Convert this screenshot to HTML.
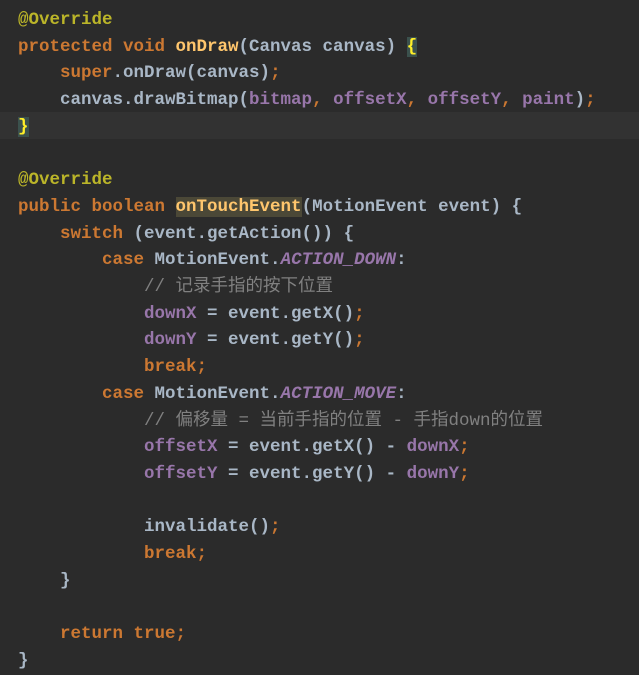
<!DOCTYPE html>
<html><head><meta charset="utf-8"><style>
html,body{margin:0;padding:0;background:#2b2b2b;width:639px;height:672px;overflow:hidden}
pre{margin:0;position:absolute;top:7px;left:18px;font-family:"Liberation Mono","Noto Sans CJK SC",monospace;font-size:17.5px;line-height:26.7px;color:#a9b7c6;font-weight:bold}
.k{color:#cc7832}.a{color:#bbb529}.m{color:#ffc66d}.f{color:#9876aa}.i{color:#9876aa;font-style:italic}.c{color:#808080;font-weight:normal}
.hl{background:#4b4837;}
.br{background:#3b514d;color:#ffef28}
.cur{position:absolute;left:0;top:112px;width:639px;height:27px;background:#323232}
</style></head><body>
<div class="cur"></div>
<pre><span class="a">@Override</span>
<span class="k">protected void </span><span class="m">onDraw</span>(Canvas canvas) <span class="br">{</span>
    <span class="k">super</span>.onDraw(canvas)<span class="k">;</span>
    canvas.drawBitmap(<span class="f">bitmap</span><span class="k">, </span><span class="f">offsetX</span><span class="k">, </span><span class="f">offsetY</span><span class="k">, </span><span class="f">paint</span>)<span class="k">;</span>
<span class="br">}</span>

<span class="a">@Override</span>
<span class="k">public boolean </span><span class="m hl">onTouchEvent</span>(MotionEvent event) {
    <span class="k">switch </span>(event.getAction()) {
        <span class="k">case </span>MotionEvent.<span class="i">ACTION_DOWN</span>:
            <span class="c">// 记录手指的按下位置</span>
            <span class="f">downX </span>= event.getX()<span class="k">;</span>
            <span class="f">downY </span>= event.getY()<span class="k">;</span>
            <span class="k">break;</span>
        <span class="k">case </span>MotionEvent.<span class="i">ACTION_MOVE</span>:
            <span class="c">// 偏移量 = 当前手指的位置 - 手指down的位置</span>
            <span class="f">offsetX </span>= event.getX() - <span class="f">downX</span><span class="k">;</span>
            <span class="f">offsetY </span>= event.getY() - <span class="f">downY</span><span class="k">;</span>

            invalidate()<span class="k">;</span>
            <span class="k">break;</span>
    }

    <span class="k">return true;</span>
}</pre>
</body></html>
